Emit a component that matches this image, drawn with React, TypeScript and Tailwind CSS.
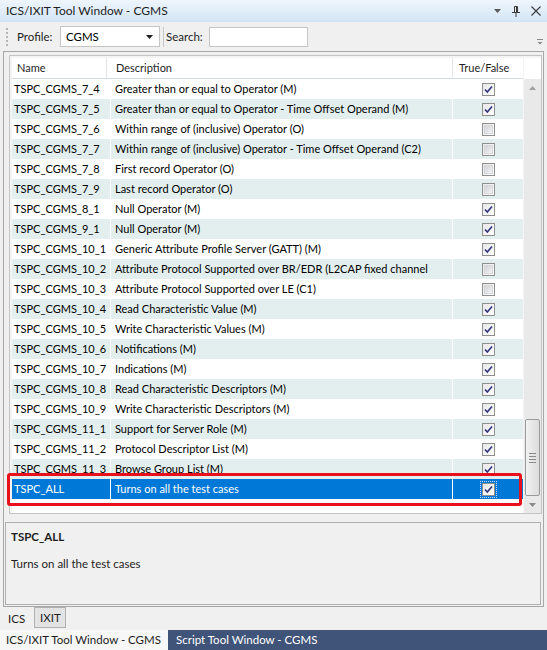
const rows: [string, string, boolean][] = [
  ["TSPC_CGMS_7_4", "Greater than or equal to Operator (M)", true],
  ["TSPC_CGMS_7_5", "Greater than or equal to Operator - Time Offset Operand (M)", true],
  ["TSPC_CGMS_7_6", "Within range of (inclusive) Operator (O)", false],
  ["TSPC_CGMS_7_7", "Within range of (inclusive) Operator - Time Offset Operand (C2)", false],
  ["TSPC_CGMS_7_8", "First record Operator (O)", false],
  ["TSPC_CGMS_7_9", "Last record Operator (O)", false],
  ["TSPC_CGMS_8_1", "Null Operator (M)", true],
  ["TSPC_CGMS_9_1", "Null Operator (M)", true],
  ["TSPC_CGMS_10_1", "Generic Attribute Profile Server (GATT) (M)", true],
  ["TSPC_CGMS_10_2", "Attribute Protocol Supported over BR/EDR (L2CAP fixed channel", false],
  ["TSPC_CGMS_10_3", "Attribute Protocol Supported over LE (C1)", false],
  ["TSPC_CGMS_10_4", "Read Characteristic Value (M)", true],
  ["TSPC_CGMS_10_5", "Write Characteristic Values (M)", true],
  ["TSPC_CGMS_10_6", "Notifications (M)", true],
  ["TSPC_CGMS_10_7", "Indications (M)", true],
  ["TSPC_CGMS_10_8", "Read Characteristic Descriptors (M)", true],
  ["TSPC_CGMS_10_9", "Write Characteristic Descriptors (M)", true],
  ["TSPC_CGMS_11_1", "Support for Server Role (M)", true],
  ["TSPC_CGMS_11_2", "Protocol Descriptor List (M)", true],
  ["TSPC_CGMS_11_3", "Browse Group List (M)", true],
  ["TSPC_ALL", "Turns on all the test cases", true],
];

function CheckBox({ checked }: { checked: boolean }) {
  return (
    <svg width="13" height="13" viewBox="0 0 13 13">
      <defs>
        <linearGradient id="cbOuter" x1="0" y1="0" x2="1" y2="1">
          <stop offset="0" stopColor="#e6e6e6" />
          <stop offset="1" stopColor="#ffffff" />
        </linearGradient>
        <linearGradient id="cbInner" x1="0" y1="0" x2="1" y2="1">
          <stop offset="0" stopColor="#cbcfd5" />
          <stop offset="1" stopColor="#f7f7f7" />
        </linearGradient>
      </defs>
      <rect x="0.5" y="0.5" width="12" height="12" fill="url(#cbOuter)" stroke="#8e8f8f" />
      {checked ? (
        <path d="M3 6.5 L5.3 9 L10 3.5" fill="none" stroke="#31347a" strokeWidth="1.6" />
      ) : (
        <rect x="2.5" y="2.5" width="8" height="8" fill="url(#cbInner)" stroke="#d8d8d8" />
      )}
    </svg>
  );
}

export default function App() {
  return (
    <div className="relative w-[547px] h-[650px] overflow-hidden bg-[#f0f0f0] text-[11px] text-black font-['Lato','Liberation_Sans',sans-serif]">
      {/* Title bar */}
      <div className="h-[22px] flex items-center pl-[6px] pr-[6px] bg-linear-to-b from-[#eef5fc] to-[#d3e5f6] text-[#1e1e1e] text-[12px]">
        <span>ICS/IXIT Tool Window - CGMS</span>
        <div className="ml-auto flex items-center gap-[10px]">
          <svg width="7" height="4" viewBox="0 0 7 4">
            <path d="M0 0 H7 L3.5 4 Z" fill="#5a5a5a" />
          </svg>
          <svg width="10" height="11" viewBox="0 0 10 11">
            <path d="M3.5 0.5 H6.5 V6.5 H3.5 Z M1 6.5 H9 M5 6.5 V11" fill="none" stroke="#3a3a3a" />
            <path d="M5.5 0.5 V6.5" stroke="#3a3a3a" />
          </svg>
          <svg width="10" height="10" viewBox="0 0 10 10">
            <path d="M0.5 0.5 L9.5 9.5 M9.5 0.5 L0.5 9.5" stroke="#3a3a3a" strokeWidth="1.1" />
          </svg>
        </div>
      </div>

      {/* Toolbar */}
      <div className="relative h-[29px] flex items-center">
        <div className="ml-[6px] w-[3px] h-[20px] flex flex-col justify-between py-[1px]">
          {Array.from({ length: 5 }).map((_, i) => (
            <div key={i} className="w-[2px] h-[2px] bg-[#b4b4b4]" />
          ))}
        </div>
        <span className="ml-[8px] w-[43px] text-[#1e1e1e] text-[11.5px]">Profile:</span>
        <div className="w-[100px] h-[21px] bg-white border border-[#c5c5c5] flex items-center pl-[5px] pr-[6px] text-[11.5px]">
          <span>CGMS</span>
          <svg className="ml-auto" width="7" height="4" viewBox="0 0 7 4">
            <path d="M0 0 H7 L3.5 4 Z" fill="#1e1e1e" />
          </svg>
        </div>
        <div className="ml-[3px] w-[1px] h-[20px] bg-[#c8c8c8]" />
        <span className="ml-[2px] w-[43px] text-[#1e1e1e] text-[11.5px]">Search:</span>
        <div className="w-[99px] h-[20px] bg-white border border-[#c5c5c5]" />
        <svg className="absolute right-[4px] top-[16px]" width="6" height="7" viewBox="0 0 6 7">
          <path d="M0 1.5 H6" stroke="#8a8a8a" />
          <path d="M0.5 4 H5.5 L3 6.5 Z" fill="#8a8a8a" />
        </svg>
      </div>

      {/* Tab page content */}
      <div className="mx-[3px] h-[556px] border border-[#a8a8a8] flex flex-col">
        {/* Grid */}
        <div className="ml-[5px] mt-[3px] w-[533px] h-[459px] border border-[#c4c4c4] bg-[#f4f4f4] pl-[2px] pt-[2px] flex">
          <div className="w-[511px] h-full bg-white flex flex-col">
            <div className="h-[21px] flex items-center border-b border-[#d5dadf] text-[#1e1e1e] shrink-0">
              <div className="w-[95px] h-full flex items-center pl-[5px] border-r border-[#e5e5e5]">Name</div>
              <div className="w-[346px] h-full flex items-center pl-[9px] border-r border-[#e5e5e5]">Description</div>
              <div className="flex-1 h-full flex items-center pl-[6px]">True/False</div>
            </div>
            {rows.map(([name, desc, checked], i) => {
              const selected = name === "TSPC_ALL";
              return (
                <div
                  key={name}
                  className={
                    selected
                      ? "h-[20px] flex items-center bg-[#0078d7] text-white shrink-0"
                      : i % 2 === 1
                        ? "h-[20px] flex items-center bg-[#e3efef] shrink-0"
                        : "h-[20px] flex items-center bg-white shrink-0"
                  }
                >
                  <div className="w-[99px] h-full flex items-center pl-[2px] border-r border-white whitespace-nowrap overflow-hidden">
                    {name}
                  </div>
                  <div className="w-[342px] h-full flex items-center pl-[4px] border-r border-white whitespace-nowrap overflow-hidden">
                    {desc}
                  </div>
                  <div className="flex-1 h-full flex items-center justify-center">
                    <div
                      className={
                        selected
                          ? "p-[1px] border border-dotted border-[#c8d8f0] flex"
                          : "p-[1px] border border-transparent flex"
                      }
                    >
                      <CheckBox checked={checked} />
                    </div>
                  </div>
                </div>
              );
            })}
          </div>

          {/* Vertical scrollbar */}
          <div className="ml-[1px] w-[17px] h-full flex flex-col">
            <div className="h-[21px] bg-white shrink-0" />
            <div className="flex-1 bg-[#e9e9e9] flex flex-col items-center">
              <div className="h-[17px] flex items-center justify-center shrink-0">
                <svg width="7" height="4" viewBox="0 0 7 4">
                  <path d="M0 4 H7 L3.5 0 Z" fill="#a0a0a0" />
                </svg>
              </div>
              <div className="flex-1" />
              <div className="w-[15px] h-[77px] rounded-[2px] border border-[#9a9a9a] bg-linear-to-r from-[#f2f2f2] to-[#dcdcdc] flex flex-col items-center justify-center gap-[2px]">
                <div className="w-[7px] h-[1px] bg-[#8a8a8a]" />
                <div className="w-[7px] h-[1px] bg-[#8a8a8a]" />
                <div className="w-[7px] h-[1px] bg-[#8a8a8a]" />
                <div className="w-[7px] h-[1px] bg-[#8a8a8a]" />
              </div>
              <div className="h-[17px] flex items-center justify-center shrink-0">
                <svg width="7" height="4" viewBox="0 0 7 4">
                  <path d="M0 0 H7 L3.5 4 Z" fill="#8a8a8a" />
                </svg>
              </div>
            </div>
          </div>
        </div>

        {/* Description panel */}
        <div className="ml-[1px] mt-[8px] w-[536px] h-[83px] border border-[#b0b0b0] bg-[#f0f0f0] px-[5px] pt-[5px] text-[#1e1e1e] text-[11.5px]">
          <div className="font-bold">TSPC_ALL</div>
          <div className="mt-[10px]">Turns on all the test cases</div>
        </div>
      </div>

      {/* Tabs */}
      <div className="h-[23px] flex items-start pl-[3px] text-[11.5px]">
        <div className="w-[31px] h-[22px] flex items-center pl-[5px] pt-[2px] text-[#1e1e1e]">ICS</div>
        <div className="w-[32px] h-[21px] border border-[#b0b0b0] bg-[#e3e3e3] flex items-center pl-[5px] text-[#1e1e1e]">
          IXIT
        </div>
      </div>

      {/* Bottom document tabs */}
      <div className="h-[20px] flex text-[11.5px]">
        <div className="w-[168px] h-full bg-[#f7f7f7] flex items-center pl-[6px] text-[#1e1e1e] whitespace-nowrap">
          ICS/IXIT Tool Window - CGMS
        </div>
        <div className="flex-1 h-full bg-[#3f5478] flex items-center pl-[8px] text-white whitespace-nowrap">
          Script Tool Window - CGMS
        </div>
      </div>

      {/* Highlight annotation */}
      <div className="absolute left-[7px] top-[473px] w-[515px] h-[33px] border-[3px] border-[#e8101a] rounded-[3px] pointer-events-none" />
    </div>
  );
}
